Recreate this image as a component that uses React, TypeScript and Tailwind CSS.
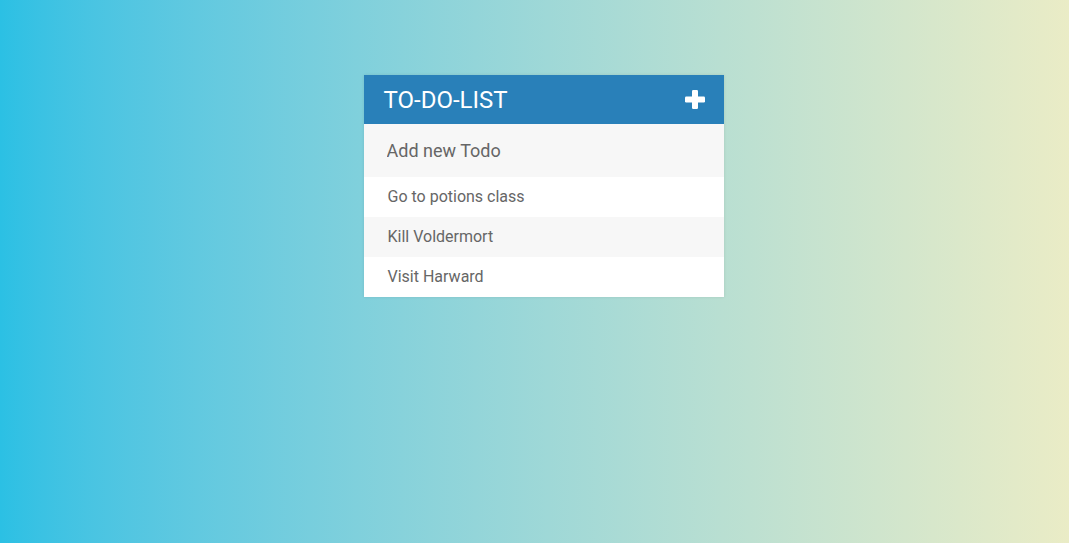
export default function App() {
  const todos = ['Go to potions class', 'Kill Voldermort', 'Visit Harward'];

  return (
    <div
      className="flex min-h-[543px] w-full justify-center bg-gradient-to-r from-[#2bc0e4] to-[#eaecc6] pl-[18px] pt-[75px]"
      style={{ fontFamily: 'Roboto, "Liberation Sans", sans-serif' }}
    >
      <div className="h-fit w-[360px] bg-white shadow-[0_0_3px_rgba(0,0,0,0.1)]">
        <div className="flex h-[49px] items-center justify-between bg-[#2980b9] pl-5 pr-[19px]">
          <h1 className="text-[24px] font-normal leading-none text-white">TO-DO-LIST</h1>
          <svg width="20" height="19" viewBox="0 0 20 19" fill="white">
            <rect x="7" y="0" width="6" height="19" rx="1.2" />
            <rect x="0" y="6.5" width="20" height="6" rx="1.2" />
          </svg>
        </div>
        <input
          type="text"
          placeholder="Add new Todo"
          className="block h-[53px] w-full bg-[#f7f7f7] px-[23px] text-[18px] text-[#666] outline-none placeholder:text-[#666]"
        />
        <ul>
          {todos.map((todo, i) => (
            <li
              key={todo}
              className={`flex h-10 items-center px-6 text-[16px] text-[#666] ${
                i % 2 === 1 ? 'bg-[#f7f7f7]' : 'bg-white'
              }`}
            >
              {todo}
            </li>
          ))}
        </ul>
      </div>
    </div>
  );
}
